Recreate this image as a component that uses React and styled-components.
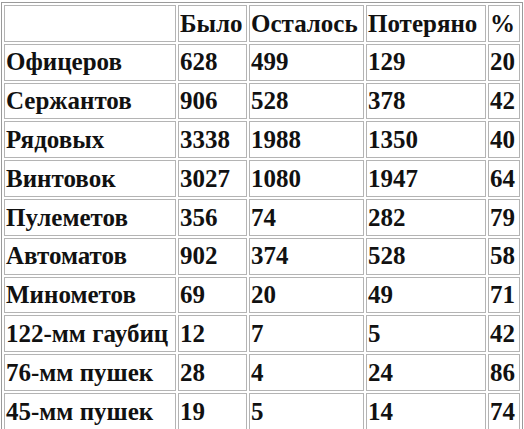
import React from "react";
import styled, { createGlobalStyle } from "styled-components";

const Global = createGlobalStyle`
  html, body { margin: 0; padding: 0; background: #fff; }
  body { width: 524px; height: 429px; overflow: hidden; }
`;

const Page = styled.div`
  padding: 2px 0 0 1px;
`;

const Table = styled.table`
  border: 1px solid #9a9a9a;
  border-collapse: separate;
  border-spacing: 2px;
  table-layout: fixed;
  width: 522px;
  font-family: "Liberation Serif", "DejaVu Serif", serif;
  font-weight: bold;
  font-size: 25px;
  color: #111;
`;

const Cell = styled.td`
  border: 1px solid #b4b4b4;
  padding: 0 1px;
  height: 34.8px;
  white-space: nowrap;
  overflow: visible;
  vertical-align: middle;
  text-align: left;
  line-height: 1.1;
`;

const widths = [172, 69, 115, 120, 32];

const header = ["", "Было", "Осталось", "Потеряно", "%"];
const rows = [
  ["Офицеров", "628", "499", "129", "20"],
  ["Сержантов", "906", "528", "378", "42"],
  ["Рядовых", "3338", "1988", "1350", "40"],
  ["Винтовок", "3027", "1080", "1947", "64"],
  ["Пулеметов", "356", "74", "282", "79"],
  ["Автоматов", "902", "374", "528", "58"],
  ["Минометов", "69", "20", "49", "71"],
  ["122-мм гаубиц", "12", "7", "5", "42"],
  ["76-мм пушек", "28", "4", "24", "86"],
  ["45-мм пушек", "19", "5", "14", "74"],
];

export default function App() {
  return (
    <>
      <Global />
      <Page>
        <Table>
          <colgroup>
            {widths.map((w, i) => (
              <col key={i} style={{ width: w }} />
            ))}
          </colgroup>
          <tbody>
            <tr>
              {header.map((h, i) => (
                <Cell key={i}>{h}</Cell>
              ))}
            </tr>
            {rows.map((r, ri) => (
              <tr key={ri}>
                {r.map((c, ci) => (
                  <Cell key={ci}>{c}</Cell>
                ))}
              </tr>
            ))}
          </tbody>
        </Table>
      </Page>
    </>
  );
}
